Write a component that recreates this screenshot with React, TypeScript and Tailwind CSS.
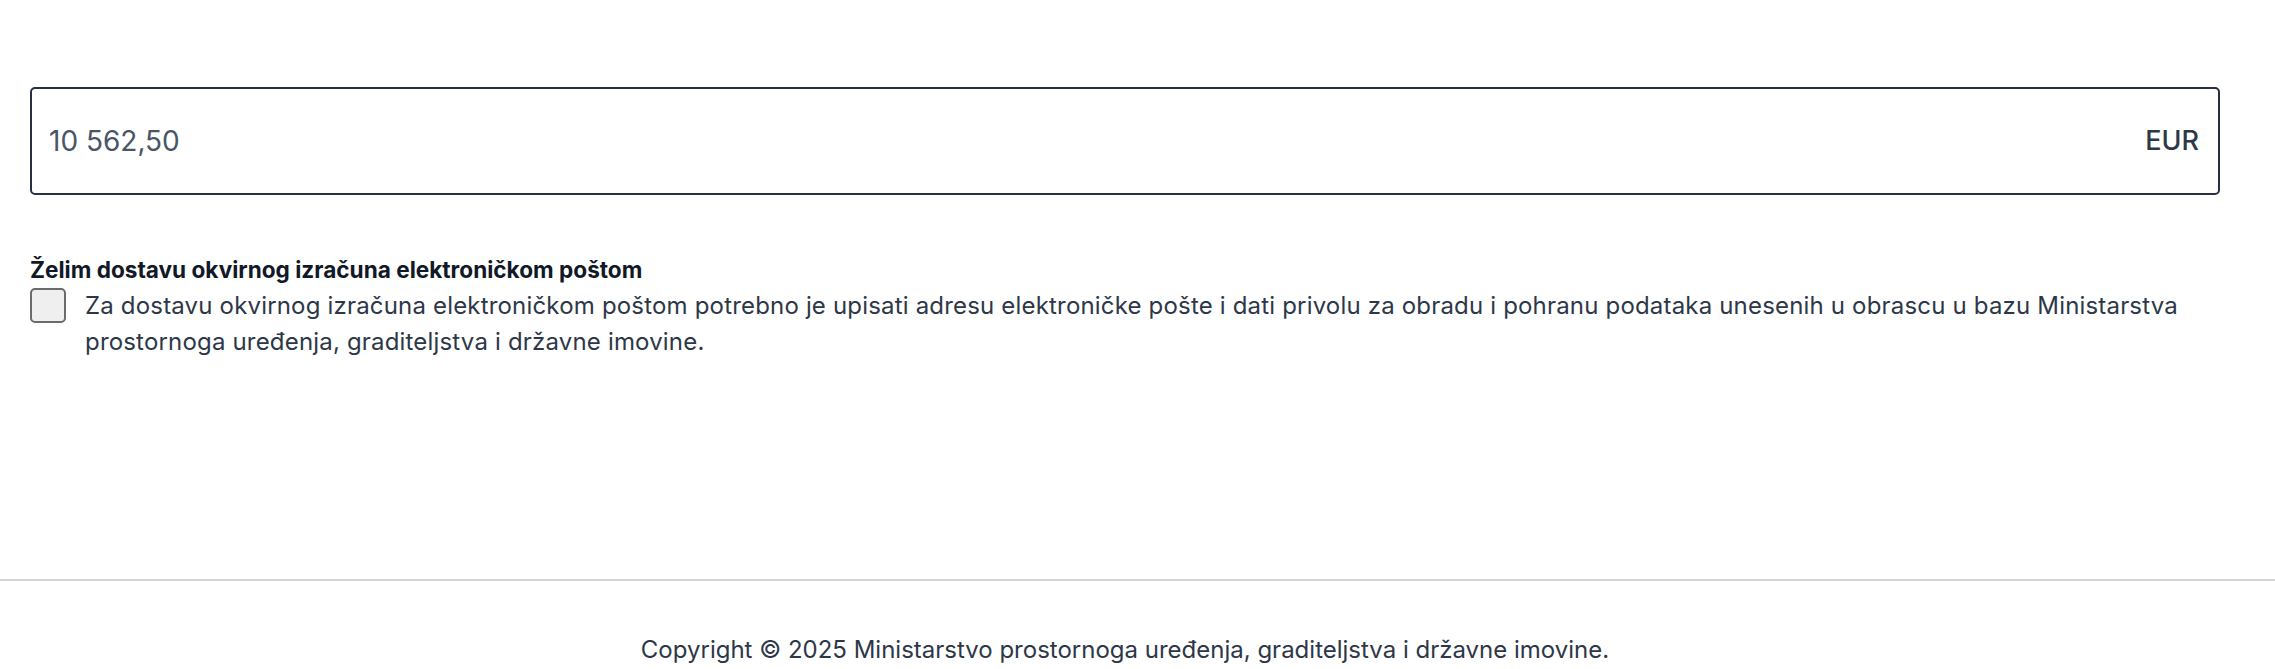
import React from 'react';

export default function App() {
  return (
    <div className="min-h-screen bg-white font-['Inter',sans-serif] text-[#2d3748]">
      <main className="ml-[30px] mr-[55px] pt-[87px]">
        <div className="flex h-[108px] items-center justify-between rounded-[5px] border-2 border-[#263244] pl-[17px] pr-[19px]">
          <span className="text-[28px] text-[#4a5568]">10 562,50</span>
          <span className="text-[27px] font-medium text-[#2d3748]">EUR</span>
        </div>

        <div className="mt-[59px]">
          <p className="text-[22.6px] font-bold leading-[31px] text-[#111827]">
            Želim dostavu okvirnog izračuna elektroničkom poštom
          </p>
          <label className="mt-[3px] flex items-start gap-[19px]">
            <span className="h-[35px] w-[36px] shrink-0 rounded-[5px] border-2 border-[#6b6b6b] bg-[#efefef]" />
            <span className="text-[24px] leading-[36px] tracking-[0.18px]">
              Za dostavu okvirnog izračuna elektroničkom poštom potrebno je upisati adresu elektroničke pošte i dati
              privolu za obradu i pohranu podataka unesenih u obrascu u bazu Ministarstva prostornoga uređenja,
              graditeljstva i državne imovine.
            </span>
          </label>
        </div>
      </main>

      <footer className="mt-[219px] border-t-2 border-[#d1d5db] pt-[51px]">
        <p className="ml-[30px] mr-[55px] text-center text-[24px] leading-[36px]">
          Copyright © 2025 Ministarstvo prostornoga uređenja, graditeljstva i državne imovine.
        </p>
      </footer>
    </div>
  );
}
